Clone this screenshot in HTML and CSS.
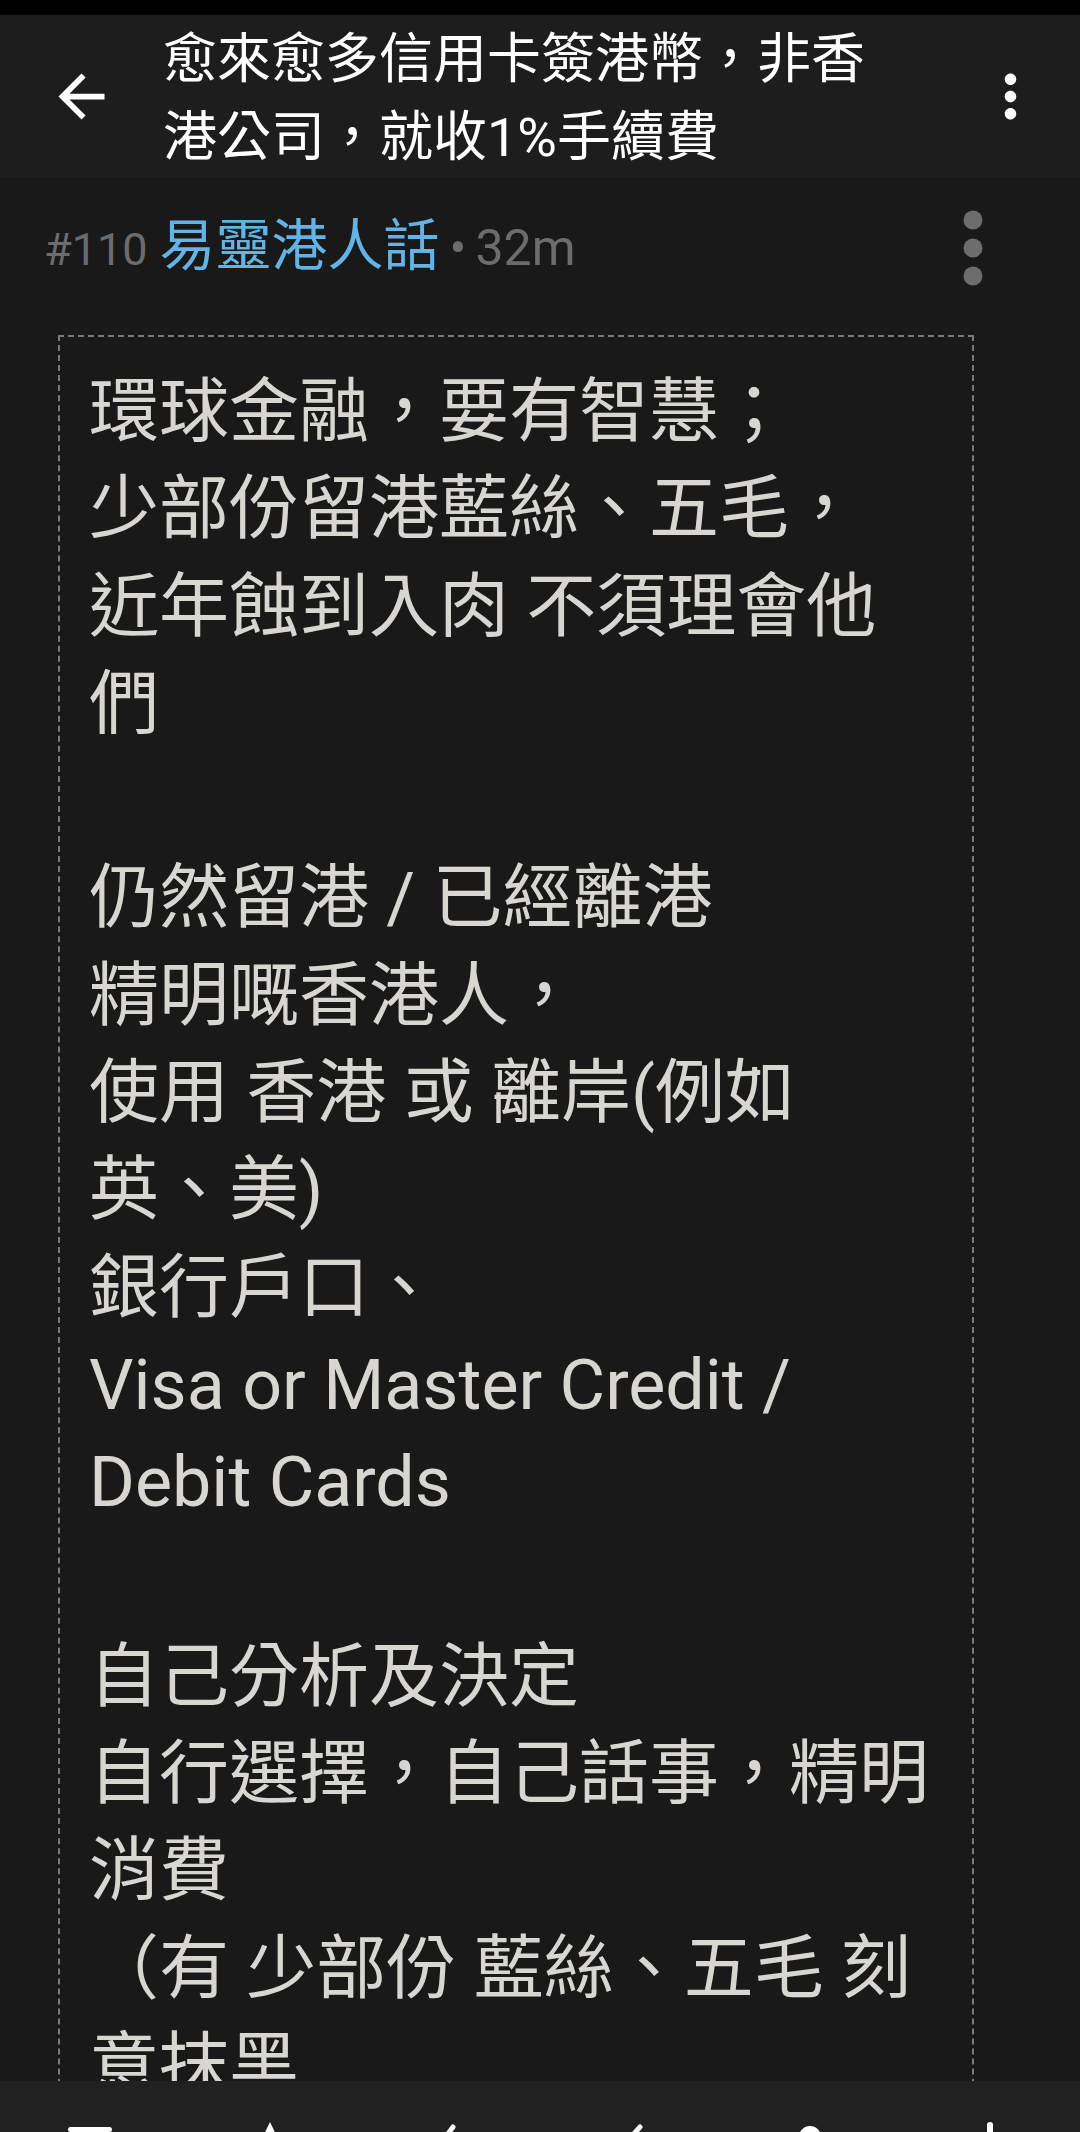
FILE: index.html
```html
<!DOCTYPE html>
<html lang="zh-Hant">
<head>
<meta charset="utf-8">
<title>Thread</title>
<link rel="stylesheet" href="styles.css">
</head>
<body>
<div class="status"></div>
<header class="appbar">
  <svg class="icon-back" viewBox="0 0 24 24"><path d="M20 11H7.83l5.59-5.59L12 4l-8 8 8 8 1.41-1.41L7.83 13H20v-2z"/></svg>
  <h1 class="title">愈來愈多信用卡簽港幣，非香港公司，就收1%手續費</h1>
  <svg class="icon-more" viewBox="0 0 24 24"><path d="M12 8c1.1 0 2-.9 2-2s-.9-2-2-2-2 .9-2 2 .9 2 2 2zm0 2c-1.1 0-2 .9-2 2s.9 2 2 2 2-.9 2-2-.9-2-2-2zm0 6c-1.1 0-2 .9-2 2s.9 2 2 2 2-.9 2-2-.9-2-2-2z"/></svg>
</header>
<main class="thread">
  <div class="meta">
    <div class="meta-text"><span class="num">#110</span><span class="author">易靈港人話</span><span class="sep">•</span><span class="time">32m</span></div>
    <svg class="meta-more" viewBox="0 0 20 76"><circle cx="10" cy="10" r="9.5"/><circle cx="10" cy="38" r="9.5"/><circle cx="10" cy="66" r="9.5"/></svg>
  </div>
  <div class="quote">
    <p class="body">環球金融，要有智慧；<br>少部份留港藍絲、五毛，<br>近年蝕到入肉 不須理會他們<br><br>仍然留港 / 已經離港<br>精明嘅香港人，<br>使用 香港 或 離岸(例如英、美)<br>銀行戶口、<br>Visa or Master Credit / Debit Cards<br><br>自己分析及決定<br>自行選擇，自己話事，精明消費<br>（有 少部份 藍絲、五毛 刻意抹黑<br>香港金融體系）</p>
  </div>
</main>
<nav class="bottomnav">
  <div class="nav-item"><svg viewBox="0 0 60 60"><rect x="8" y="6" width="44" height="5" rx="2.5"/><rect x="8" y="22" width="44" height="5" rx="2.5"/><rect x="8" y="38" width="44" height="5" rx="2.5"/></svg></div>
  <div class="nav-item"><svg viewBox="0 0 60 60"><path d="M30 1 L44 30 L16 30 Z"/></svg></div>
  <div class="nav-item"><svg viewBox="0 0 60 60"><path d="M20 24 L33 6" stroke="#fff" stroke-width="5" stroke-linecap="round" fill="none"/></svg></div>
  <div class="nav-item"><svg viewBox="0 0 60 60"><path d="M12 16 L22 26 L40 6" stroke="#fff" stroke-width="5" stroke-linecap="round" stroke-linejoin="round" fill="none"/></svg></div>
  <div class="nav-item"><svg viewBox="0 0 60 60"><circle cx="30" cy="16" r="11"/></svg></div>
  <div class="nav-item"><svg viewBox="0 0 60 60"><rect x="27" y="1" width="6" height="40" rx="3"/></svg></div>
</nav>
</body>
</html>
```
FILE: styles.css
```css
html, body {
  margin: 0;
  padding: 0;
}
body {
  background: #191919;
  height: 2132px;
  display: flex;
  flex-direction: column;
  overflow: hidden;
  font-family: Roboto, "Noto Sans CJK TC", sans-serif;
}
.status {
  flex: 0 0 15px;
  background: #000;
}
.appbar {
  flex: 0 0 162px;
  background: #1d1d1d;
  display: flex;
  align-items: center;
}
.icon-back {
  flex: none;
  width: 69px;
  height: 69px;
  margin-left: 47px;
  fill: #fff;
}
.title {
  flex: none;
  width: 730px;
  margin: 6px 0 0 47px;
  font-size: 54px;
  line-height: 78px;
  font-weight: 400;
  color: #fff;
  text-spacing-trim: space-all;
}
.icon-more {
  flex: none;
  width: 69px;
  height: 69px;
  margin-left: auto;
  margin-right: 35px;
  fill: #fff;
}
.thread {
  flex: 1 1 auto;
  min-height: 0;
  overflow: hidden;
}
.meta {
  height: 142px;
  display: flex;
  align-items: center;
  justify-content: space-between;
  padding: 0 97px 0 44px;
}
.meta-text {
  white-space: nowrap;
  line-height: 60px;
  padding-top: 10px;
}
.num {
  font-size: 45px;
  color: #6c6c6c;
}
.sep, .time {
  font-size: 50px;
  color: #6c6c6c;
}
.author {
  font-size: 56px;
  color: #62b4e6;
  margin-left: 12px;
}
.sep {
  margin: 0 9px 0 10px;
}
.meta-more {
  width: 20px;
  height: 76px;
  fill: #6d6d6d;
}
.quote {
  margin: 16px 0 0 58px;
  width: 916px;
  box-sizing: border-box;
  border: 2px dashed #7a7a7a;
  padding: 27px 37px 40px 29px;
}
.body {
  margin: 0;
  font-size: 70px;
  line-height: 97.3px;
  color: #d8d6d2;
  text-spacing-trim: space-all;
}
.bottomnav {
  flex: 0 0 51px;
  background: #212121;
  display: grid;
  grid-template-columns: repeat(6, 180px);
  overflow: hidden;
}
.nav-item {
  display: flex;
  justify-content: center;
  padding-top: 40px;
}
.nav-item svg {
  width: 60px;
  height: 60px;
  fill: #fff;
}
```
